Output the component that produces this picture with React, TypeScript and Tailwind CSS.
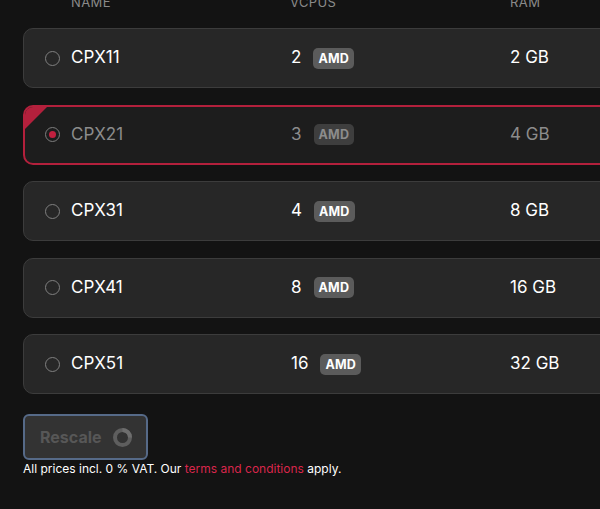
import React from "react";

interface ServerType {
  name: string;
  cores: number;
  memory: number;
}

const serverTypes: ServerType[] = [
  { name: "CPX11", cores: 2, memory: 2 },
  { name: "CPX21", cores: 3, memory: 4 },
  { name: "CPX31", cores: 4, memory: 8 },
  { name: "CPX41", cores: 8, memory: 16 },
  { name: "CPX51", cores: 16, memory: 32 },
];

function ServerRow({ server, selected }: { server: ServerType; selected: boolean }) {
  return (
    <div
      className={
        selected
          ? "relative flex h-[60px] w-[600px] shrink-0 items-center overflow-hidden rounded-[10px] border-2 border-[#b3203c] bg-[#1d1d1d] pl-[20px] text-[#8c8c8c]"
          : "relative flex h-[60px] w-[600px] shrink-0 items-center overflow-hidden rounded-[10px] border border-[#3c3c3c] bg-[#272727] pl-[21px] text-white"
      }
    >
      {selected && (
        <span className="absolute left-0 top-0 h-0 w-0 border-r-[22px] border-t-[22px] border-r-transparent border-t-[#b3203c]" />
      )}
      <span
        className={
          selected
            ? "flex h-[15px] w-[15px] items-center justify-center rounded-full border-[1.5px] border-[#7d7d7d]"
            : "flex h-[15px] w-[15px] items-center justify-center rounded-full border-[1.5px] border-[#808080]"
        }
      >
        {selected && <span className="h-[7px] w-[7px] rounded-full bg-[#c2203f]" />}
      </span>
      <span className="ml-[11px] w-[220px] text-[17px]">{server.name}</span>
      <span className="flex w-[219px] items-center gap-[12px] text-[17px]">
        {server.cores}
        <span
          className={
            selected
              ? "rounded-[5px] bg-[#3e3e3e] px-[5px] py-[2px] text-[12.5px] font-bold leading-[17px] tracking-[0.2px] text-[#8c8c8c]"
              : "rounded-[5px] bg-[#5b5b5b] px-[5px] py-[2px] text-[12.5px] font-bold leading-[17px] tracking-[0.2px] text-white"
          }
        >
          AMD
        </span>
      </span>
      <span className="text-[17px]">{server.memory} GB</span>
    </div>
  );
}

export default function App() {
  return (
    <div
      className="h-[509px] w-[600px] overflow-hidden bg-[#131313] pl-[23px]"
      style={{ fontFamily: "Inter, 'Noto Sans', sans-serif" }}
    >
      <div className="-mt-[5px] flex h-[15px] items-center text-[13px] uppercase leading-[15px] tracking-[0.4px] text-[#8a8a8a]">
        <span className="ml-[48px] w-[219px]">Name</span>
        <span className="w-[220px]">vCPUs</span>
        <span>RAM</span>
      </div>
      <div className="mt-[18px] flex flex-col gap-[16.5px]">
        {serverTypes.map((s) => (
          <ServerRow key={s.name} server={s} selected={s.name === "CPX21"} />
        ))}
      </div>
      <button
        disabled
        className="mt-[20px] flex h-[46px] w-[125px] items-center gap-[10px] rounded-[6px] border-2 border-[#566a88] bg-[#333333] pl-[15px] text-[16px] font-bold text-[#575757]"
      >
        Rescale
        <svg width="21" height="21" viewBox="0 0 21 21">
          <circle cx="10.5" cy="10.5" r="7.5" fill="none" stroke="#5e5e5e" strokeWidth="4" />
          <path d="M10.5 3 A7.5 7.5 0 0 1 18 10.5" fill="none" stroke="#6e6e6e" strokeWidth="4" />
        </svg>
      </button>
      <p className="mt-[1px] text-[12px] leading-[16px] text-white">
        All prices incl. 0 % VAT. Our <span className="text-[#d9264b]">terms and conditions</span> apply.
      </p>
    </div>
  );
}
